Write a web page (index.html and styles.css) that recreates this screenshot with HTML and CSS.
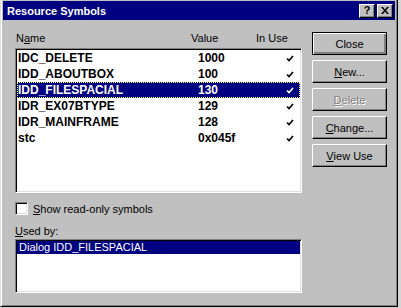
FILE: index.html
```html
<!DOCTYPE html>
<html lang="en">
  <head>
    <meta charset="UTF-8" />
    <title>Resource Symbols</title>
    <link rel="stylesheet" href="styles.css">
  </head>
  <body>
    <div class="window">
      <div class="titlebar">
        <span class="title">Resource Symbols</span>
        <div class="caption-btns">
          <div class="cap-btn">?</div>
          <div class="cap-btn close-x">
            <svg width="8" height="7" viewBox="0 0 8 7"><path d="M0 0h2l2 2.5L6 0h2L5 3.5 8 7H6L4 4.5 2 7H0l3-3.5z" fill="#000"/></svg>
          </div>
        </div>
      </div>
      <div class="content">
        <div class="left">
          <div class="header">
            <span>N<u>a</u>me</span>
            <span>Value</span>
            <span>In Use</span>
          </div>
          <div class="listbox symbols">
            <div class="row"><span>IDC_DELETE</span><span>1000</span><span class="tick"><svg width="8" height="7" viewBox="0 0 8 7"><path d="M1 3.5l2 2L7 1" fill="none" stroke="currentColor" stroke-width="1.7"/></svg></span></div>
            <div class="row"><span>IDD_ABOUTBOX</span><span>100</span><span class="tick"><svg width="8" height="7" viewBox="0 0 8 7"><path d="M1 3.5l2 2L7 1" fill="none" stroke="currentColor" stroke-width="1.7"/></svg></span></div>
            <div class="row selected"><span>IDD_FILESPACIAL</span><span>130</span><span class="tick"><svg width="8" height="7" viewBox="0 0 8 7"><path d="M1 3.5l2 2L7 1" fill="none" stroke="currentColor" stroke-width="1.7"/></svg></span></div>
            <div class="row"><span>IDR_EX07BTYPE</span><span>129</span><span class="tick"><svg width="8" height="7" viewBox="0 0 8 7"><path d="M1 3.5l2 2L7 1" fill="none" stroke="currentColor" stroke-width="1.7"/></svg></span></div>
            <div class="row"><span>IDR_MAINFRAME</span><span>128</span><span class="tick"><svg width="8" height="7" viewBox="0 0 8 7"><path d="M1 3.5l2 2L7 1" fill="none" stroke="currentColor" stroke-width="1.7"/></svg></span></div>
            <div class="row"><span>stc</span><span>0x045f</span><span class="tick"><svg width="8" height="7" viewBox="0 0 8 7"><path d="M1 3.5l2 2L7 1" fill="none" stroke="currentColor" stroke-width="1.7"/></svg></span></div>
          </div>
          <label class="check">
            <span class="box"></span>
            <span><u>S</u>how read-only symbols</span>
          </label>
          <div class="used-label"><u>U</u>sed by:</div>
          <div class="listbox used">
            <div class="used-row">Dialog IDD_FILESPACIAL</div>
          </div>
        </div>
        <div class="buttons">
          <div class="btn default">Close</div>
          <div class="btn"><u>N</u>ew...</div>
          <div class="btn disabled"><u>D</u>elete</div>
          <div class="btn"><u>C</u>hange...</div>
          <div class="btn"><u>V</u>iew Use</div>
        </div>
      </div>
    </div>
  </body>
</html>
```

FILE: styles.css
```css
* {
  margin: 0;
  padding: 0;
  box-sizing: border-box;
}
body {
  background: #d4d4d4;
  font-family: "Liberation Sans", Arial, sans-serif;
  font-size: 11px;
  color: #000;
  overflow: hidden;
}
.window {
  width: 398px;
  height: 309px;
  margin-top: -2px;
  background: #c0c0c0;
  border: 1px solid #000;
  border-top-color: #dfdfdf;
  border-left-color: #dfdfdf;
  box-shadow: inset 1px 1px #fff, inset -1px -1px #808080;
  padding: 2px;
  display: flex;
  flex-direction: column;
}
.titlebar {
  height: 19px;
  background: #000080;
  display: flex;
  align-items: center;
  justify-content: space-between;
  padding: 0 2px 0 4px;
}
.title {
  color: #fff;
  font-weight: bold;
  font-size: 11px;
}
.caption-btns {
  display: flex;
  gap: 2px;
}
.cap-btn {
  width: 16px;
  height: 14px;
  background: #c0c0c0;
  border: 1px solid #000;
  border-top-color: #fff;
  border-left-color: #fff;
  box-shadow: inset -1px -1px #808080;
  display: flex;
  align-items: center;
  justify-content: center;
  font-weight: bold;
  font-size: 11px;
  line-height: 1;
}
.content {
  display: flex;
  gap: 10px;
  padding: 12px 0 0 12px;
}
.left {
  width: 287px;
  display: flex;
  flex-direction: column;
}
.header {
  height: 16px;
  line-height: 13px;
  display: grid;
  grid-template-columns: 175px 65px 1fr;
  padding-left: 1px;
}
.listbox {
  background: #fff;
  border: 1px solid #fff;
  border-top-color: #808080;
  border-left-color: #808080;
  box-shadow: inset 1px 1px #000, inset -1px -1px #dfdfdf;
  padding: 1px;
}
.symbols {
  height: 145px;
}
.row {
  height: 16px;
  display: grid;
  grid-template-columns: 180px 88px 1fr;
  align-items: center;
  font-weight: bold;
  font-size: 12px;
  padding-left: 1px;
}
.row.selected {
  background: #000080;
  color: #fff;
  outline: 1px dotted #ffff60;
  outline-offset: -1px;
}
.tick {
  display: flex;
  align-items: center;
}
.check {
  display: flex;
  align-items: center;
  gap: 5px;
  margin-top: 9px;
  height: 13px;
}
.box {
  width: 13px;
  height: 13px;
  background: #fff;
  border: 1px solid #fff;
  border-top-color: #808080;
  border-left-color: #808080;
  box-shadow: inset 1px 1px #000, inset -1px -1px #dfdfdf;
}
.used-label {
  margin-top: 10px;
  line-height: 13px;
}
.used {
  margin-top: 1px;
  height: 54px;
}
.used-row {
  background: #000080;
  color: #fff;
  height: 13px;
  line-height: 13px;
  padding-left: 2px;
}
.buttons {
  width: 75px;
  display: flex;
  flex-direction: column;
  gap: 5px;
}
.btn {
  height: 23px;
  background: #c0c0c0;
  border: 1px solid #000;
  border-top-color: #fff;
  border-left-color: #fff;
  box-shadow: inset -1px -1px #808080;
  display: flex;
  align-items: center;
  justify-content: center;
}
.btn.default {
  border: 1px solid #000;
  box-shadow: inset 1px 1px #fff, inset -2px -2px #808080;
}
.btn.disabled {
  color: #808080;
  text-shadow: 1px 1px #fff;
}
```
